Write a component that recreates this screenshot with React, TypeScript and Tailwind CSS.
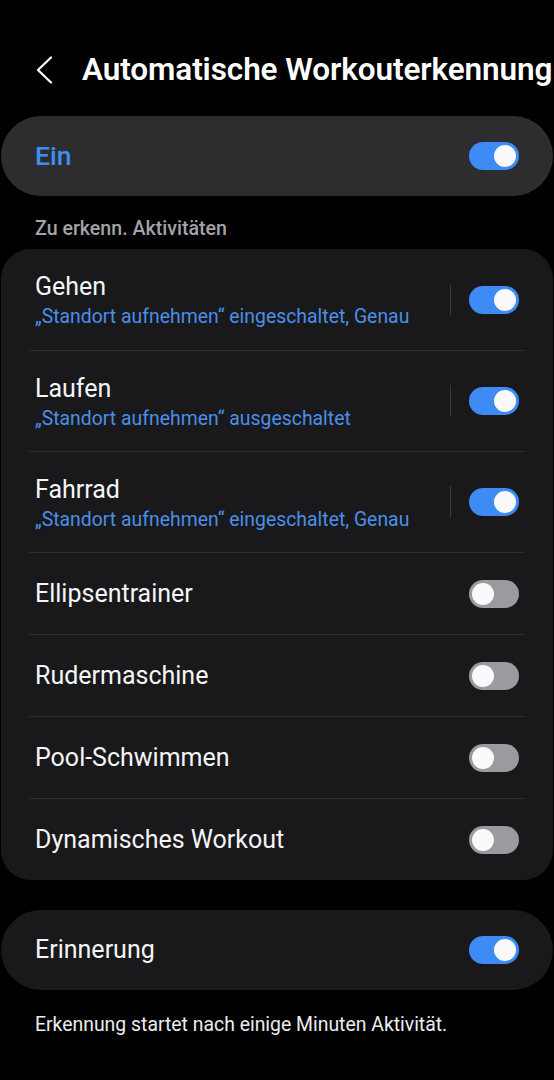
type Item = { name: string; sub?: string; on: boolean };

const items: Item[] = [
  { name: 'Gehen', sub: '„Standort aufnehmen“ eingeschaltet, Genau', on: true },
  { name: 'Laufen', sub: '„Standort aufnehmen“ ausgeschaltet', on: true },
  { name: 'Fahrrad', sub: '„Standort aufnehmen“ eingeschaltet, Genau', on: true },
  { name: 'Ellipsentrainer', on: false },
  { name: 'Rudermaschine', on: false },
  { name: 'Pool-Schwimmen', on: false },
  { name: 'Dynamisches Workout', on: false },
];

const Toggle = ({ on }: { on: boolean }) => (
  <div
    className={
      on
        ? 'w-[50px] h-[28px] rounded-full bg-[#3e8bf5] flex items-center justify-end px-[3px]'
        : 'w-[50px] h-[28px] rounded-full bg-[#9a9a9f] flex items-center justify-start px-[3px]'
    }
  >
    <div className="w-[22px] h-[22px] rounded-full bg-[#fafafc]" />
  </div>
);

export default function App() {
  return (
    <div className="min-h-[1080px] bg-black text-white font-['Roboto',sans-serif]">
      {/* Header */}
      <div className="flex items-center h-[116px] pt-[24px] pl-[36px]">
        <svg width="18" height="28" viewBox="0 0 18 28" fill="none">
          <polyline points="15,1.5 2,14 15,26.5" stroke="white" strokeWidth="2.2" strokeLinecap="round" strokeLinejoin="round" />
        </svg>
        <h1 className="ml-[28px] text-[31.5px] font-semibold whitespace-nowrap tracking-[-0.1px]">
          Automatische Workouterkennung
        </h1>
      </div>

      {/* Master switch */}
      <div className="mx-[1px] h-[80px] rounded-full bg-[#2d2d2f] flex items-center justify-between pl-[34px] pr-[34px]">
        <span className="text-[26.5px] font-medium text-[#3f8ef2]">Ein</span>
        <Toggle on />
      </div>

      <div className="px-[35px] pt-[19px] pb-[6px] text-[19.6px] leading-[28px] font-medium text-[#a3a3a8]">
        Zu erkenn. Aktivitäten
      </div>

      {/* Activities */}
      <div className="mx-[1px] rounded-[30px] bg-[#19191b] px-[28px]">
        {items.map((item, i) => (
          <div
            key={item.name}
            className={
              (i > 0 ? 'border-t border-[#2e2e31] ' : '') +
              (item.sub ? 'h-[101px] ' : 'h-[82px] ') +
              'flex items-center justify-between pl-[6px] pr-[6px]'
            }
          >
            <div className={item.sub ? 'flex flex-col pt-[3px]' : 'flex flex-col'}>
              <span className="text-[25px] leading-[32px] text-[#f5f5f7]">{item.name}</span>
              {item.sub && (
                <span className="text-[19.4px] leading-[28px] text-[#4a8fe8]">{item.sub}</span>
              )}
            </div>
            <div className="flex items-center">
              {item.sub && <div className="w-[1px] h-[32px] bg-[#3a3a3d] mr-[18px]" />}
              <Toggle on={item.on} />
            </div>
          </div>
        ))}
      </div>

      {/* Reminder */}
      <div className="mx-[1px] mt-[30px] h-[80px] rounded-full bg-[#19191b] flex items-center justify-between pl-[34px] pr-[34px]">
        <span className="text-[25px] text-[#f5f5f7]">Erinnerung</span>
        <Toggle on />
      </div>

      <p className="px-[35px] pt-[21px] text-[19.4px] leading-[28px] text-[#ececef]">
        Erkennung startet nach einige Minuten Aktivität.
      </p>
    </div>
  );
}
